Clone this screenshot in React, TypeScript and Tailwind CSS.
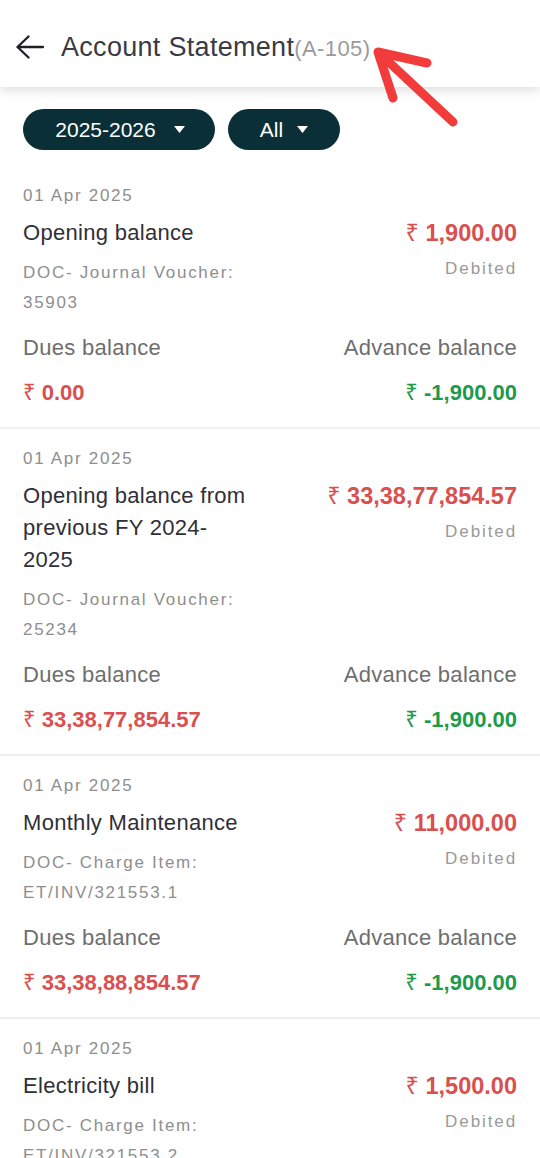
import React from "react";

type Entry = {
  date: string;
  title: string;
  doc: string;
  amount: string;
  dues: string;
  advance: string;
};

const entries: Entry[] = [
  {
    date: "01 Apr 2025",
    title: "Opening balance",
    doc: "DOC- Journal Voucher: 35903",
    amount: "1,900.00",
    dues: "0.00",
    advance: "-1,900.00",
  },
  {
    date: "01 Apr 2025",
    title: "Opening balance from previous FY 2024-2025",
    doc: "DOC- Journal Voucher: 25234",
    amount: "33,38,77,854.57",
    dues: "33,38,77,854.57",
    advance: "-1,900.00",
  },
  {
    date: "01 Apr 2025",
    title: "Monthly Maintenance",
    doc: "DOC- Charge Item: ET/INV/321553.1",
    amount: "11,000.00",
    dues: "33,38,88,854.57",
    advance: "-1,900.00",
  },
  {
    date: "01 Apr 2025",
    title: "Electricity bill",
    doc: "DOC- Charge Item: ET/INV/321553.2",
    amount: "1,500.00",
    dues: "33,39,03,854.57",
    advance: "-1,900.00",
  },
];

function Caret() {
  return (
    <svg width="11" height="7" viewBox="0 0 11 7">
      <polygon points="0,0 11,0 5.5,7" fill="white" />
    </svg>
  );
}

function Money({ value, className }: { value: string; className: string }) {
  return (
    <span className={`font-bold ${className}`}>
      <span className="font-normal">₹</span> {value}
    </span>
  );
}

function EntryRow({ e }: { e: Entry }) {
  return (
    <div className="border-b-2 border-[#efefef] px-[23px] pt-[18px] pb-[19px]">
      <div className="text-[17px] leading-[24px] tracking-[1.7px] text-[#8e8e8e]">
        {e.date}
      </div>
      <div className="mt-[9px] flex">
        <div className="w-[226px]">
          <div className="text-[22px] leading-[32px] tracking-[0.3px] text-[#2f2f37]">
            {e.title}
          </div>
          <div className="mt-[9px] text-[17px] leading-[30px] tracking-[1.7px] text-[#8e8e8e]">
            {e.doc}
          </div>
        </div>
        <div className="flex-1 text-right">
          <div className="text-[23.5px] leading-[32px] whitespace-nowrap">
            <Money value={e.amount} className="text-[#d9504f]" />
          </div>
          <div className="mt-[5px] text-[17px] leading-[30px] tracking-[1.9px] text-[#9a9a9a]">
            Debited
          </div>
        </div>
      </div>
      <div className="mt-[15px] flex justify-between text-[22px] leading-[30px] tracking-[0.3px] text-[#6e6e6e]">
        <span>Dues balance</span>
        <span>Advance balance</span>
      </div>
      <div className="mt-[15px] flex justify-between text-[22px] leading-[30px]">
        <Money value={e.dues} className="text-[#d9504f]" />
        <Money value={e.advance} className="text-[#1d9a4b]" />
      </div>
    </div>
  );
}

export default function App() {
  return (
    <div
      className="relative h-[1158px] w-[540px] overflow-hidden bg-white"
      style={{ fontFamily: '"Liberation Sans", "Noto Sans", sans-serif' }}
    >
      <header className="relative z-10 flex h-[87px] items-center bg-white pt-[7px] shadow-[0_4px_10px_rgba(0,0,0,0.12)]">
        <svg className="ml-[16px]" width="28" height="24" viewBox="0 0 28 24" fill="none">
          <path
            d="M1.5 12H27M12.5 1.5L1.5 12L12.5 22.5"
            stroke="#1f1f24"
            strokeWidth="2.3"
            strokeLinecap="round"
            strokeLinejoin="round"
          />
        </svg>
        <h1 className="ml-[17px] text-[27px] tracking-[0.3px] text-[#3a3a44]">
          Account Statement
          <span className="text-[22px] tracking-[0.4px] text-[#9b9b9b]">(A-105)</span>
        </h1>
      </header>

      <div className="flex gap-[13px] px-[23px] pt-[22px] pb-[16px]">
        <button className="flex h-[41px] w-[192px] items-center justify-center gap-[18px] rounded-full bg-[#0b2f36] pl-[2px] text-[21px] text-white">
          2025-2026
          <Caret />
        </button>
        <button className="flex h-[41px] w-[112px] items-center justify-center gap-[14px] rounded-full bg-[#0b2f36] text-[21px] text-white">
          All
          <Caret />
        </button>
      </div>

      <div>
        {entries.map((e, i) => (
          <EntryRow key={i} e={e} />
        ))}
      </div>

      <svg
        className="pointer-events-none absolute left-0 top-0 z-20"
        width="540"
        height="160"
        viewBox="0 0 540 160"
        fill="none"
      >
        <path
          d="M453 122L378 52M378 52L427 63M378 52L393 98"
          stroke="#f23b3b"
          strokeWidth="9"
          strokeLinecap="round"
          strokeLinejoin="round"
        />
      </svg>
    </div>
  );
}
